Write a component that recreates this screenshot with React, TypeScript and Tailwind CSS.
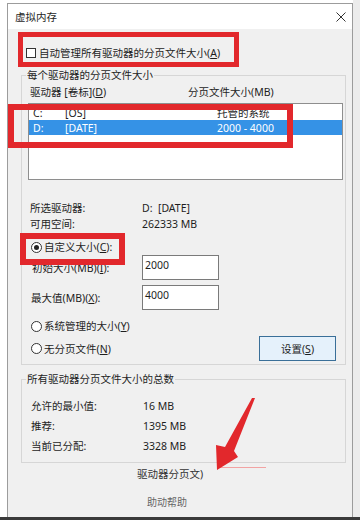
import React from "react";

function Radio({ checked }: { checked?: boolean }) {
  return (
    <span className="flex h-[11px] w-[11px] shrink-0 items-center justify-center rounded-full border border-[#333] bg-white">
      {checked && <span className="h-[5px] w-[5px] rounded-full bg-[#222]" />}
    </span>
  );
}

export default function App() {
  return (
    <div className="relative h-[520px] w-[360px] overflow-hidden bg-white font-['Noto_Sans','Noto_Sans_CJK_SC',sans-serif] text-[10.5px] leading-[16px] text-[#1e1e1e]">
      <div className="flex h-[517px]">
        <div className="w-[7px] shrink-0" />
        <div className="mt-[3px] flex h-[514px] w-[346px] shrink-0 flex-col border border-b-0 border-[#9c9c9c]">
          <div className="flex h-[25px] items-center justify-between bg-white pl-[7px] pr-[6px]">
            <span>虚拟内存</span>
            <svg width="10" height="10" viewBox="0 0 10 10">
              <path d="M0.5 0.5 L9.5 9.5 M9.5 0.5 L0.5 9.5" stroke="#333" strokeWidth="1" fill="none" />
            </svg>
          </div>
          <div className="flex flex-1 flex-col bg-[#f0f0f0] pl-[13px] pr-[6px]">
            <div className="mt-[16px] flex items-center pl-[5px]">
              <span className="h-[10px] w-[10px] border border-[#333] bg-white" />
              <span className="ml-[3px]">
                自动管理所有驱动器的分页文件大小(<u>A</u>)
              </span>
            </div>

            <div className="relative mt-[14px] flex flex-col border border-[#d6d6d6] pb-[3px]">
              <span className="absolute left-[4px] top-[-9px] bg-[#f0f0f0] px-[1px]">每个驱动器的分页文件大小</span>
              <div className="mt-[8px] flex pl-[8px]">
                <span className="w-[158px]">
                  驱动器 [卷标](<u>D</u>)
                </span>
                <span>分页文件大小(MB)</span>
              </div>
              <div className="ml-[6px] mr-[2px] mt-[3px] h-[77px] border border-[#8e8e8e] bg-white pt-[1px]">
                <div className="flex h-[15px] items-center pl-[4px]">
                  <span className="w-[32px]">C:</span>
                  <span className="w-[152px]">[OS]</span>
                  <span>托管的系统</span>
                </div>
                <div className="flex h-[15px] items-center bg-[#3592e6] pl-[4px] text-white">
                  <span className="w-[32px]">D:</span>
                  <span className="w-[152px]">[DATE]</span>
                  <span>2000 - 4000</span>
                </div>
              </div>
              <div className="mt-[20px] flex pl-[8px]">
                <span className="w-[112px]">所选驱动器:</span>
                <span>D:&nbsp;&nbsp;[DATE]</span>
              </div>
              <div className="flex pl-[8px]">
                <span className="w-[112px]">可用空间:</span>
                <span>262333 MB</span>
              </div>
              <div className="mt-[7px] flex h-[16px] items-center pl-[9px]">
                <Radio checked />
                <span className="ml-[2px]">
                  自定义大小(<u>C</u>):
                </span>
              </div>
              <div className="flex h-[25px] items-center pl-[10px]">
                <span className="w-[110px]">
                  初始大小(MB)(<u>I</u>):
                </span>
                <div className="h-[25px] w-[77px] border border-[#7a7a7a] bg-white pl-[2px] pt-[1px]">2000</div>
              </div>
              <div className="mt-[5px] flex h-[25px] items-center pl-[9px]">
                <span className="w-[111px]">
                  最大值(MB)(<u>X</u>):
                </span>
                <div className="h-[25px] w-[77px] border border-[#7a7a7a] bg-white pl-[2px] pt-[1px]">4000</div>
              </div>
              <div className="mt-[8px] flex h-[16px] items-center pl-[9px]">
                <Radio />
                <span className="ml-[2px]">
                  系统管理的大小(<u>Y</u>)
                </span>
              </div>
              <div className="mt-[2px] flex h-[25px] items-center justify-between pl-[9px] pr-[9px]">
                <div className="flex items-center">
                  <Radio />
                  <span className="ml-[2px]">
                    无分页文件(<u>N</u>)
                  </span>
                </div>
                <div className="flex h-[25px] w-[77px] items-center justify-center border border-[#3a6f98] bg-[#e5f1fb]">
                  设置(<u>S</u>)
                </div>
              </div>
            </div>

            <div className="relative mt-[14px] flex flex-col border border-[#d6d6d6] pb-[6px] pt-[16px]">
              <span className="absolute left-[4px] top-[-9px] bg-[#f0f0f0] px-[1px]">所有驱动器分页文件大小的总数</span>
              <div className="flex h-[20px] items-center pl-[9px]">
                <span className="w-[112px]">允许的最小值:</span>
                <span>16 MB</span>
              </div>
              <div className="flex h-[20px] items-center pl-[9px]">
                <span className="w-[112px]">推荐:</span>
                <span>1395 MB</span>
              </div>
              <div className="flex h-[20px] items-center pl-[9px]">
                <span className="w-[112px]">当前已分配:</span>
                <span>3328 MB</span>
              </div>
            </div>

            <div className="ml-[116px] mt-[3px] text-[#333]">驱动器分页文)</div>
            <div className="ml-[126px] mt-[12px] text-[10px] text-[#666]">助动帮助</div>
          </div>
        </div>
        <div className="w-[7px] shrink-0 bg-[#ececec]" />
      </div>
      <div className="h-[3px] bg-[#3a3a3a]" />

      <div className="absolute left-[18px] top-[32px] h-[35px] w-[221px] border-[5px] border-[#e2282c]" />
      <div className="absolute left-[8px] top-[104px] h-[44px] w-[285px] border-[6px] border-[#e2282c]" />
      <div className="absolute left-[20px] top-[233px] h-[32px] w-[105px] border-[6px] border-[#e2282c]" />
      <div className="absolute left-[218px] top-[467px] h-[1px] w-[48px] bg-[#f2a3a3]" />
      <svg className="absolute left-0 top-0" width="360" height="520" viewBox="0 0 360 520">
        <polygon points="255,398 234,451 238,457 217,470 216,445 225,447 252,398" fill="#e2282c" />
      </svg>
    </div>
  );
}
